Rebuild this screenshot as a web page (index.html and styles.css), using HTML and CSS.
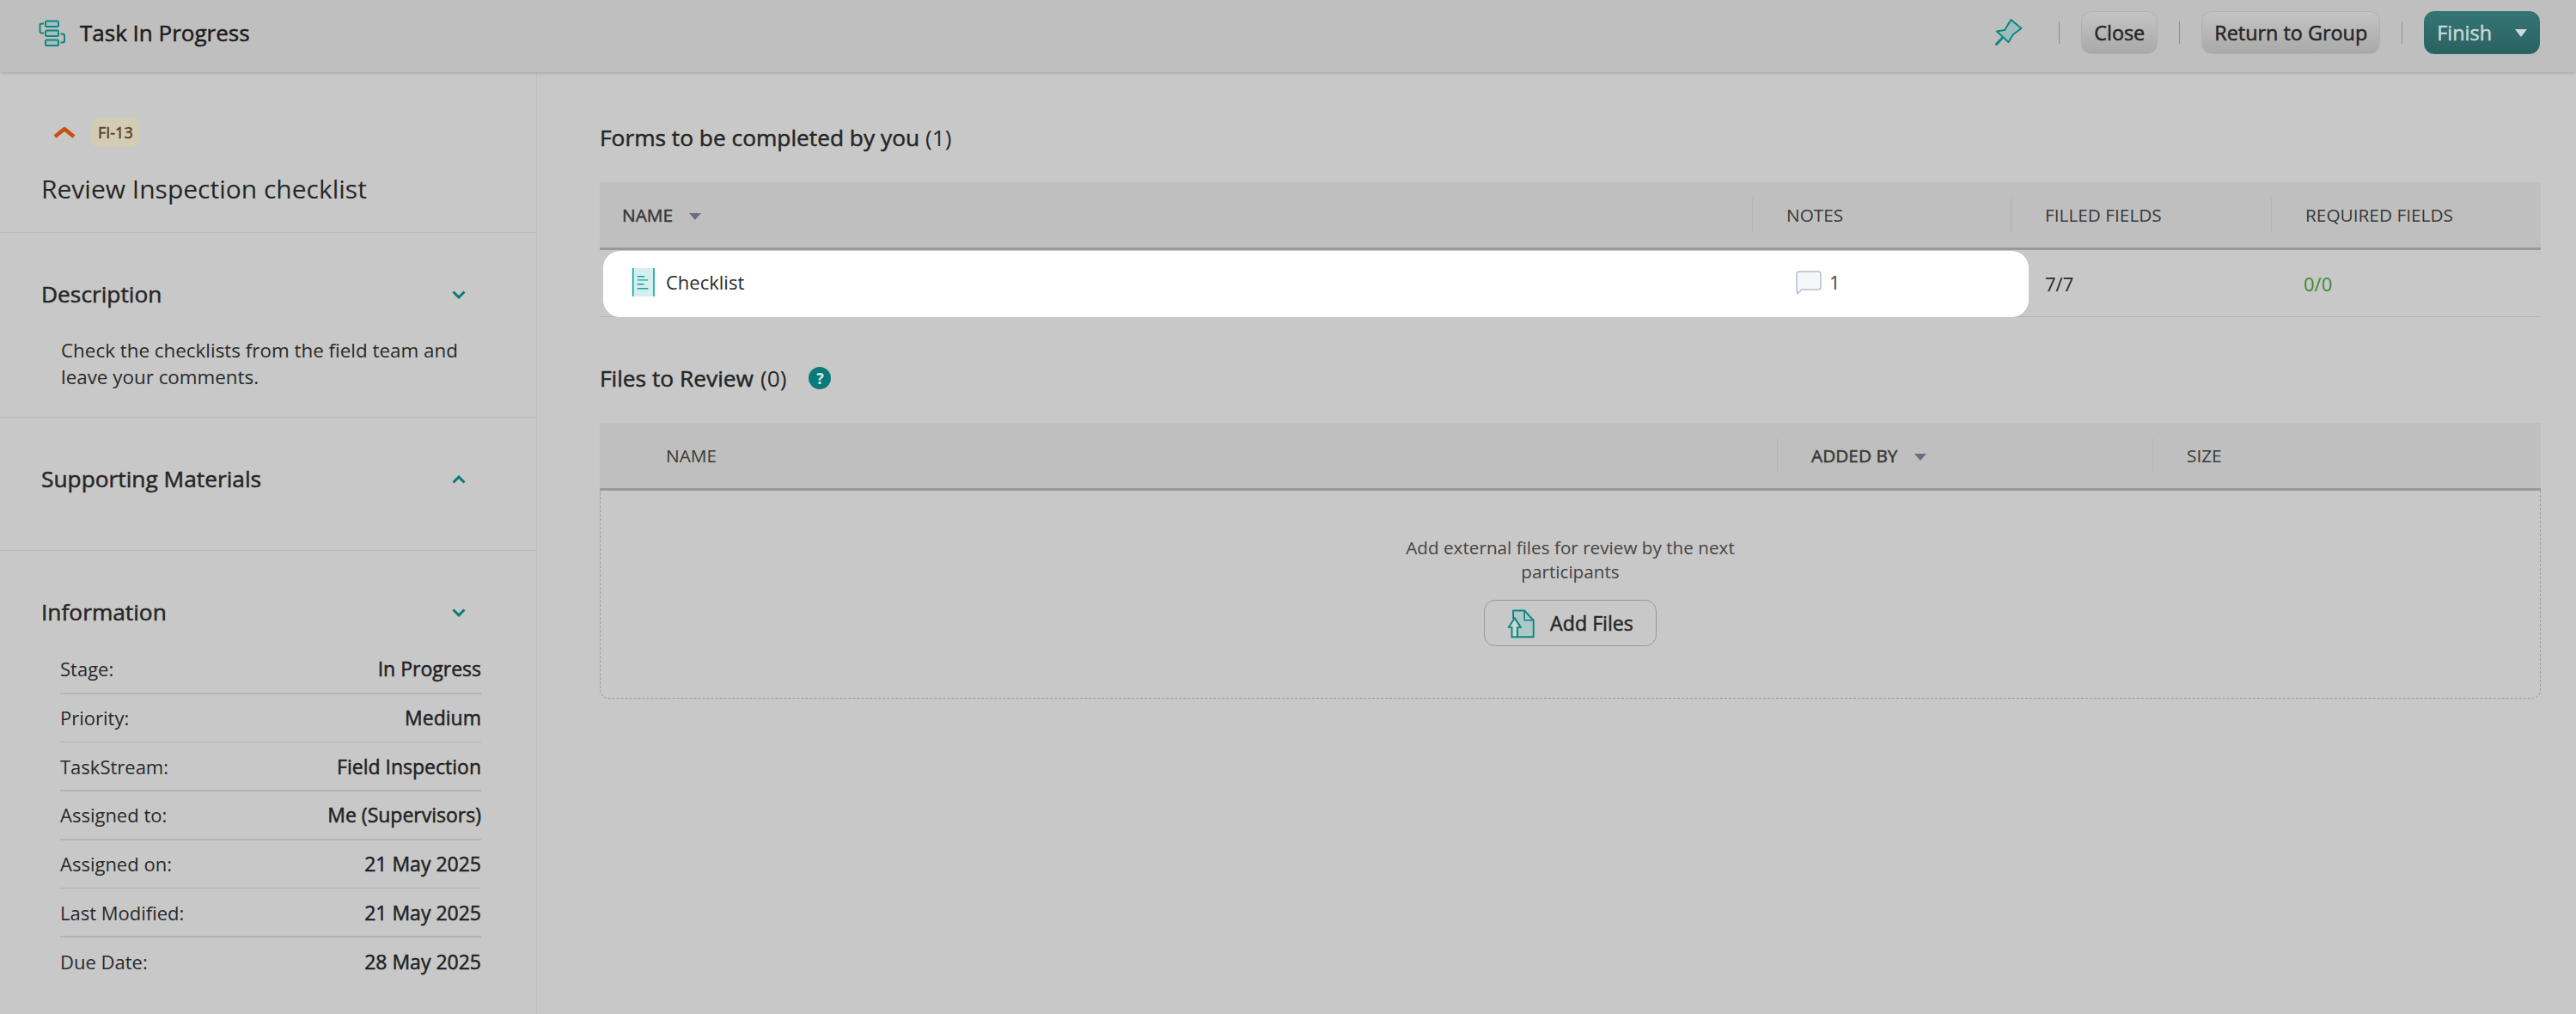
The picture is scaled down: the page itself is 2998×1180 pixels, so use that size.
FILE: index.html
```html
<!DOCTYPE html>
<html lang="en">
<head>
    <meta charset="UTF-8">
    <meta name="viewport" content="width=device-width, initial-scale=1.0">
    <title>Task In Progress</title>
    <link rel="stylesheet" href="styles.css">
</head>
<body>
    <header class="topbar">
        <div class="topbar-title">
            <svg class="flow-icon" viewBox="14 11 33 33" fill="none" stroke="#0e8683" stroke-width="2">
                <rect x="23" y="13.5" width="15" height="6.5" rx="1.5" fill="#a5bfbd"/>
                <rect x="23" y="24.5" width="15" height="6.5" rx="1.5" fill="#a5bfbd"/>
                <rect x="23" y="35.5" width="15" height="6.5" rx="1.5" fill="#a5bfbd"/>
                <path d="M21 16.5h-2.5a2 2 0 0 0-2 2v7a2 2 0 0 0 2 2H21"/>
                <path d="M40.5 28.5H43a2 2 0 0 1 2 2v6a2 2 0 0 1-2 2h-2.5"/>
            </svg>
            <span>Task In Progress</span>
        </div>
        <div class="topbar-actions">
            <svg class="pin-icon" viewBox="10 5 40 40" fill="#9dbdbb" stroke="#0e8683" stroke-width="2" stroke-linejoin="round">
                <path d="M14 23.5L23 22L30.5 10L42.5 20L33 27L27.5 36Z"/>
                <path d="M13.5 38.5L20 31.5" stroke-width="3" stroke-linecap="round"/>
            </svg>
            <span class="sep"></span>
            <button class="btn">Close</button>
            <span class="sep"></span>
            <button class="btn">Return to Group</button>
            <span class="sep"></span>
            <button class="btn btn-finish">Finish <i class="finish-caret"></i></button>
        </div>
    </header>

    <div class="layout">
        <aside class="sidebar">
            <section class="side-top">
                <div class="task-key">
                    <svg class="priority-icon" viewBox="0 0 26 14" fill="none" stroke="#c9500c" stroke-width="4.5" stroke-linejoin="round">
                        <polyline points="2,12 13,3 24,12"/>
                    </svg>
                    <span class="badge">FI-13</span>
                </div>
                <h1 class="task-name">Review Inspection checklist</h1>
            </section>

            <section class="side-section">
                <div class="side-head">
                    <h2>Description</h2>
                    <svg class="chevron" viewBox="0 0 16 10"><polyline points="1.5,1.5 8,8 14.5,1.5"/></svg>
                </div>
                <p class="side-text">Check the checklists from the field team and leave your comments.</p>
            </section>

            <section class="side-section side-materials">
                <div class="side-head">
                    <h2>Supporting Materials</h2>
                    <svg class="chevron" viewBox="0 0 16 10"><polyline points="1.5,8.5 8,2 14.5,8.5"/></svg>
                </div>
            </section>

            <section class="side-section side-info">
                <div class="side-head">
                    <h2>Information</h2>
                    <svg class="chevron" viewBox="0 0 16 10"><polyline points="1.5,1.5 8,8 14.5,1.5"/></svg>
                </div>
                <dl class="info-list">
                    <div class="info-row thick"><dt>Stage:</dt><dd>In Progress</dd></div>
                    <div class="info-row"><dt>Priority:</dt><dd>Medium</dd></div>
                    <div class="info-row thick"><dt>TaskStream:</dt><dd>Field Inspection</dd></div>
                    <div class="info-row thick"><dt>Assigned to:</dt><dd>Me (Supervisors)</dd></div>
                    <div class="info-row"><dt>Assigned on:</dt><dd>21 May 2025</dd></div>
                    <div class="info-row thick"><dt>Last Modified:</dt><dd>21 May 2025</dd></div>
                    <div class="info-row last"><dt>Due Date:</dt><dd>28 May 2025</dd></div>
                </dl>
            </section>
        </aside>

        <main class="content">
            <h2 class="block-title">Forms to be completed by you <span>(1)</span></h2>
            <div class="table-head forms-head">
                <div class="th th-first strong">NAME <i class="caret"></i></div>
                <div class="th">NOTES</div>
                <div class="th">FILLED FIELDS</div>
                <div class="th">REQUIRED FIELDS</div>
            </div>
            <div class="form-row">
                <div class="spotlight">
                    <div class="form-name">
                        <svg class="form-icon" viewBox="14 13 28 33">
                            <rect x="16" y="13" width="24" height="33" fill="#d7eeee"/>
                            <path d="M15.7 13V46M40 13V46" stroke="#0aa5a0" stroke-width="1.6"/>
                            <path d="M20.7 22.7H29M20.7 26.9H33.3M20.7 31.7H28.5M20.7 36.7H33.3" stroke="#0aa5a0" stroke-width="1.4"/>
                        </svg>
                        Checklist
                    </div>
                    <div class="form-notes">
                        <svg class="note-icon" viewBox="0 0 30 28">
                            <path d="M4 1H26a3 3 0 0 1 3 3V19a3 3 0 0 1-3 3H7L2 27L1 22V4a3 3 0 0 1 3-3Z" fill="#f4f6f9" stroke="#b4bfcc" stroke-width="1.5" stroke-linejoin="round"/>
                        </svg>
                        1
                    </div>
                </div>
                <div class="form-filled">7/7</div>
                <div class="form-required">0/0</div>
            </div>

            <h2 class="block-title files-title">Files to Review <span>(0)</span> <i class="help">?</i></h2>
            <div class="table-head files-head">
                <div class="th th-files">NAME</div>
                <div class="th strong">ADDED BY <i class="caret"></i></div>
                <div class="th">SIZE</div>
            </div>
            <div class="files-empty">
                <p>Add external files for review by the next participants</p>
                <button class="add-btn">
                    <svg class="add-icon" viewBox="21 17 33 35" stroke="#0e8683" stroke-width="2" stroke-linejoin="round">
                        <path d="M28.3 28V19H41.7L52.7 30.7V50.7H33.3V39H37.3L30 28Z" fill="#aec8c6"/>
                        <path d="M41.7 19.3V30.7H52.7" fill="none" stroke-width="1.6"/>
                        <path d="M30 28L22.7 39.3H26.7V50.7H33.3V39.3H37.3Z" fill="#c8d8d6"/>
                    </svg>
                    Add Files
                </button>
            </div>
        </main>
    </div>
</body>
</html>
```

FILE: styles.css
```css
* {
    box-sizing: border-box;
}
body {
    margin: 0;
    height: 1180px;
    overflow: hidden;
    background-color: #c8c8c8;
    color: #2a2a2a;
    font-family: "Open Sans", "Noto Sans", sans-serif;
    font-size: 22px;
}
h1, h2, p, dl, dd {
    margin: 0;
    font-weight: normal;
}

/* no medium cut of the font here, so thicken the regular one */
.topbar-title, .btn, .badge, .side-head h2, .info-row dd, .block-title, .strong, .add-btn {
    -webkit-text-stroke: 0.5px currentColor;
}
.block-title span {
    -webkit-text-stroke: 0;
}

/* top bar */
.topbar {
    display: flex;
    justify-content: space-between;
    align-items: center;
    height: 84px;
    padding: 0 42px 8px 44px;
    background-color: #bfbfbf;
    box-shadow: 0 1px 4px rgba(0, 0, 0, 0.18);
    position: relative;
}
.topbar-title {
    display: flex;
    align-items: center;
    gap: 16px;
    font-size: 26px;
    color: #1d1d1d;
}
.flow-icon {
    width: 33px;
    height: 33px;
}
.topbar-actions {
    display: flex;
    align-items: center;
    gap: 25px;
}
.pin-icon {
    width: 40px;
    height: 40px;
    margin-right: 11px;
}
.sep {
    width: 1px;
    height: 26px;
    background-color: #8f8f8f;
}
.btn {
    height: 50px;
    padding: 0 14px;
    border: 1px solid #b0b0b0;
    border-radius: 12px;
    background: linear-gradient(#c4c4c4, #a9a9a9);
    color: #262626;
    font-family: inherit;
    font-size: 23.4px;
}
.btn-finish {
    display: flex;
    align-items: center;
    gap: 27px;
    border-color: #2f6b6b;
    background: linear-gradient(#357575, #2b6161);
    color: #c9d9d8;
}
.finish-caret {
    width: 0;
    height: 0;
    border-left: 7px solid transparent;
    border-right: 7px solid transparent;
    border-top: 9px solid #d0dcdc;
}

/* sidebar */
.layout {
    display: flex;
    height: 1096px;
}
.sidebar {
    flex: 0 0 625px;
    border-right: 1px solid #bfbfbf;
}
.side-top {
    height: 187px;
    padding: 53px 0 0 48px;
    border-bottom: 1px solid #b9b9b9;
}
.task-key {
    display: flex;
    align-items: center;
    gap: 18px;
    padding-left: 14px;
}
.priority-icon {
    width: 26px;
    height: 14px;
}
.badge {
    padding: 0 8px;
    height: 34px;
    line-height: 34px;
    border-radius: 8px;
    background-color: #d3ccb5;
    color: #54431a;
    font-size: 18px;
}
.task-name {
    margin-top: 30px;
    font-size: 30px;
    line-height: 38px;
    color: #262626;
}
.side-section {
    padding: 54px 0 31px 48px;
    border-bottom: 1px solid #b9b9b9;
}
.side-materials {
    padding-bottom: 66px;
}
.side-info {
    padding-bottom: 0;
    border-bottom: none;
}
.side-head {
    display: flex;
    justify-content: space-between;
    align-items: center;
    height: 34px;
    padding-right: 82px;
}
.side-head h2 {
    font-size: 26.3px;
    color: #262626;
}
.chevron {
    width: 16px;
    height: 10px;
    margin-top: 1px;
    fill: none;
    stroke: #0a7a78;
    stroke-width: 3;
}
.side-text {
    width: 490px;
    margin: 33px 0 0 23px;
    font-size: 22.4px;
    line-height: 31px;
}

.info-list {
    width: 490px;
    margin: 22px 0 0 22px;
}
.info-row {
    display: flex;
    justify-content: space-between;
    align-items: center;
    height: 56.67px;
    border-bottom: 1px solid #b4b4b4;
}
.info-row.thick {
    border-bottom-width: 2px;
}
.info-row.last {
    border-bottom: none;
}
.info-row dd {
    font-size: 23px;
    color: #222;
}

/* main column */
.content {
    flex: 1;
    padding: 59px 41px 0 73px;
}
.block-title {
    font-size: 26.3px;
    line-height: 34px;
    color: #262626;
}
.files-title {
    display: flex;
    align-items: center;
    gap: 8px;
    margin-top: 54px;
}
.help {
    width: 26px;
    height: 26px;
    margin-left: 18px;
    border-radius: 50%;
    background-color: #0a7a78;
    color: #dfe9e8;
    font-size: 18px;
    font-style: normal;
    font-weight: 700;
    line-height: 26px;
    text-align: center;
    -webkit-text-stroke: 0;
}
.table-head {
    display: grid;
    align-items: center;
    height: 79px;
    margin-top: 35px;
    background-color: #bfbfbf;
    border-bottom: 3px solid #999;
    font-size: 20.8px;
}
.forms-head {
    grid-template-columns: 1341px 301px 303px 1fr;
}
.files-head {
    grid-template-columns: 1370px 437px 1fr;
}
.th {
    height: 40px;
    padding-left: 39px;
    border-left: 1px solid #b4b4b4;
    line-height: 40px;
    color: #383838;
}
.th-first, .th-files {
    border-left: none;
}
.th-first {
    padding-left: 26px;
}
.th-files {
    padding-left: 77px;
}
.caret {
    display: inline-block;
    width: 0;
    height: 0;
    margin-left: 14px;
    border-left: 7px solid transparent;
    border-right: 7px solid transparent;
    border-top: 8px solid #6a6e80;
    vertical-align: 2px;
}

.form-row {
    display: grid;
    grid-template-columns: 1663px 301px 1fr;
    align-items: center;
    height: 78px;
    border-bottom: 1px solid #b4b4b4;
}
.spotlight {
    display: flex;
    align-items: center;
    align-self: start;
    height: 77px;
    margin: 1px 0 0 4px;
    padding: 0 0 5px 33px;
    border-radius: 20px;
    background-color: #fff;
    position: relative;
}
.form-name {
    display: flex;
    align-items: center;
    gap: 12px;
    width: 1355px;
}
.form-icon {
    width: 28px;
    height: 33px;
}
.form-notes {
    display: flex;
    align-items: center;
    gap: 9px;
    color: #444;
}
.note-icon {
    width: 30px;
    height: 28px;
    margin-top: 2px;
}
.form-filled {
    padding-left: 19px;
}
.form-required {
    padding-left: 19px;
    color: #3a8a2e;
}

.files-empty {
    height: 242px;
    padding-top: 52px;
    border: 1px dashed #9c9c9c;
    border-top: none;
    border-radius: 0 0 10px 10px;
    text-align: center;
    font-size: 20.7px;
    color: #444;
}
.files-empty p {
    width: 440px;
    margin: 0 auto;
    line-height: 28px;
}
.add-btn {
    display: inline-flex;
    align-items: center;
    gap: 18px;
    height: 54px;
    margin-top: 19px;
    padding: 0 26px;
    border: 1px solid #999;
    border-radius: 13px;
    background: none;
    color: #262626;
    font-family: inherit;
    font-size: 23.2px;
}
.add-icon {
    width: 32px;
    height: 35px;
}
```
